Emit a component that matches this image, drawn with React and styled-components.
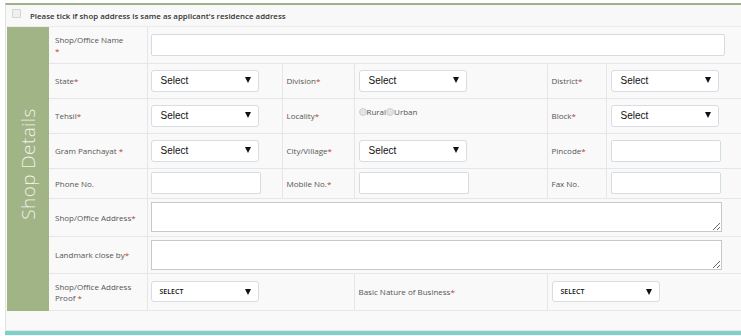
import * as React from "react";
import styled, { createGlobalStyle } from "styled-components";

const GlobalStyle = createGlobalStyle`
  html, body {
    margin: 0;
    padding: 0;
    background: #ffffff;
    font-family: "Open Sans", "Liberation Sans", sans-serif;
  }
`;

const Page = styled.div`
  width: 741px;
  height: 336px;
  overflow: hidden;
  padding-top: 3px;
  box-sizing: border-box;
`;

const Panel = styled.div`
  margin-left: 5px;
  border-top: 2px solid #9fb189;
  border-left: 1px solid #e2e2e2;
  background: #f9f9f9;
`;

const CheckRow = styled.div`
  height: 21px;
  display: flex;
  align-items: center;
  padding-left: 6px;
  border-bottom: 1px solid #ececec;
  background: #f8f8f8;
`;

const Box = styled.span`
  width: 7px;
  height: 7px;
  border: 1px solid #d4d4d4;
  border-radius: 1px;
  background: #f0f0f0;
  margin-right: 9px;
  margin-top: -4px;
`;

const CheckText = styled.span`
  font-size: 7.9px;
  font-weight: 600;
  color: #333;
`;

const Body = styled.div`
  display: flex;
  padding-left: 1px;
`;

const Sidebar = styled.div`
  width: 42px;
  flex: none;
  background: #a1b486;
  display: flex;
  align-items: center;
  justify-content: center;
`;

const SideTitle = styled.span`
  transform: rotate(-90deg);
  white-space: nowrap;
  font-size: 19px;
  font-weight: 300;
  color: #eef2e8;
  letter-spacing: 0.4px;
  margin-top: -10px;
`;

const Table = styled.table`
  width: 692px;
  table-layout: fixed;
  border-collapse: collapse;
`;

const Row = styled.tr`
  height: ${(p) => p.$h}px;
  border-bottom: 1px solid #e6e6e6;
`;

const Label = styled.td`
  padding: 0 4px 0 ${(p) => p.$pl || 4}px;
  font-size: 8px;
  line-height: 11px;
  color: #555;
  vertical-align: middle;
  border-right: 1px solid #e6e6e6;
`;

const Cell = styled.td`
  padding: 0 3px 0 ${(p) => p.$pl || 3}px;
  vertical-align: middle;
  border-right: 1px solid #e6e6e6;
`;

const Req = styled.span`
  color: #c0392b;
  display: ${(p) => (p.$block ? "block" : "inline")};
`;

const TextInput = styled.div`
  width: ${(p) => p.$w || 110}px;
  height: 22px;
  box-sizing: border-box;
  background: #fff;
  border: 1px solid #d3dbe3;
  border-radius: 2px;
`;

const Area = styled.textarea`
  display: block;
  width: 571px;
  height: 30px;
  box-sizing: border-box;
  border: 1px solid #c8c8c8;
  background: #fff;
  margin: 0;
  padding: 0;
`;

const SelectBox = styled.div`
  width: 108px;
  height: ${(p) => (p.$small ? 21 : 22)}px;
  box-sizing: border-box;
  background: #fff;
  border: 1px solid #d6dde4;
  border-radius: 3px;
  display: flex;
  align-items: center;
  justify-content: space-between;
  padding: ${(p) => (p.$small ? "0 7px 0 8px" : "0 7px 0 9px")};
  font-family: ${(p) =>
    p.$small ? '"Open Sans", sans-serif' : '"Liberation Sans", Arial, sans-serif'};
  font-size: ${(p) => (p.$small ? "7px" : "10px")};
  font-weight: ${(p) => (p.$small ? 600 : 400)};
  color: #111;
`;

const Arrow = styled.span`
  width: 0;
  height: 0;
  border-left: 3px solid transparent;
  border-right: 3px solid transparent;
  border-top: 6px solid #111;
  margin-top: ${(p) => (p.$small ? 0 : -2)}px;
`;

const Radios = styled.div`
  display: flex;
  align-items: center;
  font-size: 8px;
  color: #555;
  margin-top: -8px;
`;

const Radio = styled.span`
  width: 6px;
  height: 6px;
  border-radius: 50%;
  background: #e4e4e4;
  border: 1px solid #d0d0d0;
`;

const Footer = styled.div`
  height: 19px;
  border-bottom: 1px solid #e6e6e6;
`;

const NextPanel = styled.div`
  margin-left: 5px;
  height: 10px;
  border-top: 4px solid #7fcfca;
  background: #f4f4f4;
`;

function Select({ small }) {
  return (
    <SelectBox $small={small}>
      <span>{small ? "SELECT" : "Select"}</span>
      <Arrow $small={small} />
    </SelectBox>
  );
}

export default function App() {
  return (
    <Page>
      <GlobalStyle />
      <Panel>
        <CheckRow>
          <Box />
          <CheckText>Please tick if shop address is same as applicant's residence address</CheckText>
        </CheckRow>
        <Body>
          <Sidebar>
            <SideTitle>Shop Details</SideTitle>
          </Sidebar>
          <Table>
            <colgroup>
              <col style={{ width: 98 }} />
              <col style={{ width: 135 }} />
              <col style={{ width: 72 }} />
              <col style={{ width: 193 }} />
              <col style={{ width: 59 }} />
              <col style={{ width: 135 }} />
            </colgroup>
            <tbody>
              <Row $h={36}>
                <Label $pl={6}>
                  Shop/Office Name
                  <Req $block>*</Req>
                </Label>
                <Cell colSpan={5}>
                  <TextInput $w={574} />
                </Cell>
              </Row>
              <Row $h={35}>
                <Label $pl={6}>State<Req>*</Req></Label>
                <Cell><Select /></Cell>
                <Label>Division<Req>*</Req></Label>
                <Cell $pl={4}><Select /></Cell>
                <Label>District<Req>*</Req></Label>
                <Cell $pl={4}><Select /></Cell>
              </Row>
              <Row $h={35}>
                <Label $pl={6}>Tehsil<Req>*</Req></Label>
                <Cell><Select /></Cell>
                <Label>Locality<Req>*</Req></Label>
                <Cell $pl={4}>
                  <Radios>
                    <Radio />Rural<Radio />Urban
                  </Radios>
                </Cell>
                <Label>Block<Req>*</Req></Label>
                <Cell $pl={4}><Select /></Cell>
              </Row>
              <Row $h={35}>
                <Label $pl={6}>Gram Panchayat <Req>*</Req></Label>
                <Cell><Select /></Cell>
                <Label>City/Village<Req>*</Req></Label>
                <Cell $pl={4}><Select /></Cell>
                <Label>Pincode<Req>*</Req></Label>
                <Cell $pl={4}><TextInput /></Cell>
              </Row>
              <Row $h={30}>
                <Label $pl={6}>Phone No.</Label>
                <Cell><TextInput /></Cell>
                <Label>Mobile No.<Req>*</Req></Label>
                <Cell $pl={4}><TextInput /></Cell>
                <Label>Fax No.</Label>
                <Cell $pl={4}><TextInput /></Cell>
              </Row>
              <Row $h={38}>
                <Label $pl={6}>Shop/Office Address<Req>*</Req></Label>
                <Cell colSpan={5}><Area /></Cell>
              </Row>
              <Row $h={37}>
                <Label $pl={6}>Landmark close by<Req>*</Req></Label>
                <Cell colSpan={5}><Area /></Cell>
              </Row>
              <Row $h={37}>
                <Label $pl={6}>
                  Shop/Office Address
                  <br />
                  Proof <Req>*</Req>
                </Label>
                <Cell colSpan={2}><Select small /></Cell>
                <Label $pl={4}>Basic Nature of Business<Req>*</Req></Label>
                <Cell colSpan={2} $pl={4}><Select small /></Cell>
              </Row>
            </tbody>
          </Table>
        </Body>
        <Footer />
      </Panel>
      <NextPanel />
    </Page>
  );
}
